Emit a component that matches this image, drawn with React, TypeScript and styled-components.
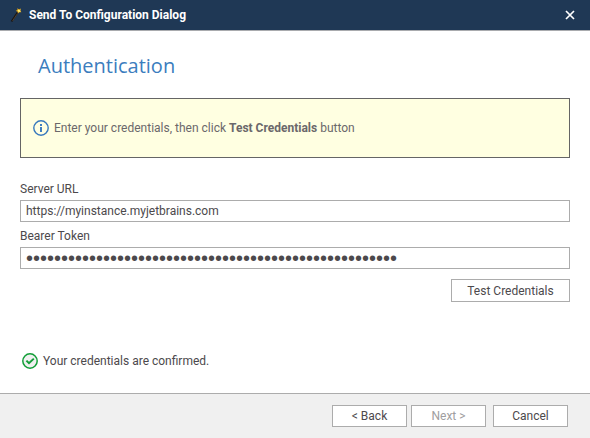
import React, { useState } from "react";
import styled, { createGlobalStyle } from "styled-components";

const GlobalStyle = createGlobalStyle`
  *, *::before, *::after { box-sizing: border-box; }
  body {
    margin: 0;
    background: #ffffff;
    color: #4c494c;
    font-family: Roboto, "Open Sans", sans-serif;
    font-size: 12px;
    line-height: 16px;
  }
  button, input { font: inherit; color: inherit; }
`;

const Dialog = styled.form`
  display: flex;
  flex-direction: column;
  min-height: 100vh;
`;

const TitleBar = styled.header`
  display: flex;
  align-items: center;
  height: 31px;
  padding: 0 14px 0 9px;
  gap: 6px;
  background: #1f3855;
  border-bottom: 1px solid #a9abae;
  color: #ffffff;
`;

const Title = styled.h1`
  flex: 1;
  margin: 0;
  font-size: 12px;
  font-weight: 700;
`;

const CloseButton = styled.button`
  display: flex;
  padding: 0;
  border: 0;
  background: none;
`;

const Content = styled.main`
  flex: 1;
  display: flex;
  flex-direction: column;
  padding: 21px 20px 0;
`;

const Heading = styled.h2`
  margin: 0 18px 18px;
  color: #3b7dbe;
  font-family: "Open Sans", "Noto Sans", sans-serif;
  font-size: 20px;
  font-weight: 400;
  line-height: 28px;
`;

const Notice = styled.p`
  display: flex;
  align-items: center;
  gap: 5px;
  height: 60px;
  margin: 0 0 23px;
  padding: 0 12px;
  border: 1px solid #656565;
  background: #ffffe1;
  color: #6b686b;
`;

const Field = styled.div`
  display: flex;
  flex-direction: column;
  gap: 3px;
  margin-bottom: 6px;
`;

const TextInput = styled.input<{ $masked?: boolean }>`
  width: 100%;
  height: 22px;
  padding: 0 5px;
  border: 1px solid #acacac;
  border-radius: 0;
  background: #ffffff;
  outline: none;
  ${({ $masked }) => $masked && `font-family: "Liberation Sans", sans-serif; font-size: 20px;`}
`;

const Button = styled.button<{ $wide?: boolean }>`
  width: ${({ $wide }) => ($wide ? 119 : 75)}px;
  height: ${({ $wide }) => ($wide ? 23 : 22)}px;
  padding: 0;
  border: 1px solid #acacac;
  border-radius: 0;
  background: #ffffff;
  &:disabled { color: #a09ea0; }
`;

const FieldActions = styled.div`
  display: flex;
  justify-content: flex-end;
  margin-top: 4px;
`;

const Status = styled.p`
  display: flex;
  align-items: center;
  gap: 5px;
  margin: 51px 2px 0;
`;

const Footer = styled.footer`
  display: flex;
  justify-content: flex-end;
  align-items: flex-start;
  gap: 7px;
  padding: 11px 22px;
  border-top: 1px solid #acacac;
  background: #f0f0f0;
`;

const StepButtons = styled.div`
  display: flex;
  gap: 4px;
`;

const WandIcon = () => (
  <svg width="14" height="16" viewBox="0 0 14 16" aria-hidden="true">
    <path d="M2.5 14.5 8.5 5.5" stroke="#1a1613" strokeWidth="1.8" fill="none" />
    <path d="M3.5 14 8.5 6.5" stroke="#594735" strokeWidth="0.8" fill="none" />
    <path d="m8.2 1.2 1.8 1 2-.6-.6 2 1 1.7-2-.1L9 6.6l-.5-1.9-1.9-1 1.8-.8z" fill="#d59b19" />
    <path d="m9 2.2 1.2 1 1.2-.6-.3 1.3.5 1-1.3-.1-.8.8-.2-1.4-1-.6.9-.4z" fill="#fff27b" />
  </svg>
);

const CloseIcon = () => (
  <svg width="12" height="12" viewBox="0 0 12 12" aria-hidden="true">
    <path d="m2 2 8 8m0-8-8 8" stroke="#ffffff" strokeWidth="1.7" />
  </svg>
);

const InfoIcon = () => (
  <svg width="16" height="16" viewBox="0 0 16 16" fill="none" aria-hidden="true">
    <circle cx="8" cy="8" r="7.2" stroke="#3879bd" strokeWidth="1.4" />
    <path d="M8 4v2M8 7v5" stroke="#3879bd" strokeWidth="1.9" />
  </svg>
);

const CheckIcon = () => (
  <svg width="16" height="16" viewBox="0 0 16 16" aria-hidden="true">
    <circle cx="8" cy="8" r="7.2" fill="#f0f0f0" stroke="#129e38" strokeWidth="1.5" />
    <path d="m4.4 7.6 2.6 2.6 4.8-4.6" fill="none" stroke="#129e38" strokeWidth="2" />
  </svg>
);

export default function App() {
  const [url, setUrl] = useState("https://myinstance.myjetbrains.com");
  const [token, setToken] = useState("x".repeat(53));

  return (
    <>
      <GlobalStyle />
      <Dialog onSubmit={(event) => event.preventDefault()}>
        <TitleBar>
          <WandIcon />
          <Title>Send To Configuration Dialog</Title>
          <CloseButton type="button" aria-label="Close">
            <CloseIcon />
          </CloseButton>
        </TitleBar>
        <Content>
          <Heading>Authentication</Heading>
          <Notice>
            <InfoIcon />
            <span>
              Enter your credentials, then click <b>Test Credentials</b> button
            </span>
          </Notice>
          <Field>
            <label htmlFor="server-url">Server URL</label>
            <TextInput id="server-url" type="text" value={url} onChange={(e) => setUrl(e.target.value)} />
          </Field>
          <Field>
            <label htmlFor="bearer-token">Bearer Token</label>
            <TextInput
              id="bearer-token"
              type="password"
              autoComplete="off"
              $masked
              value={token}
              onChange={(e) => setToken(e.target.value)}
            />
          </Field>
          <FieldActions>
            <Button type="button" $wide>Test Credentials</Button>
          </FieldActions>
          <Status role="status">
            <CheckIcon />
            <span>Your credentials are confirmed.</span>
          </Status>
        </Content>
        <Footer>
          <StepButtons>
            <Button type="button">&lt; Back</Button>
            <Button type="submit" disabled>Next &gt;</Button>
          </StepButtons>
          <Button type="button">Cancel</Button>
        </Footer>
      </Dialog>
    </>
  );
}
